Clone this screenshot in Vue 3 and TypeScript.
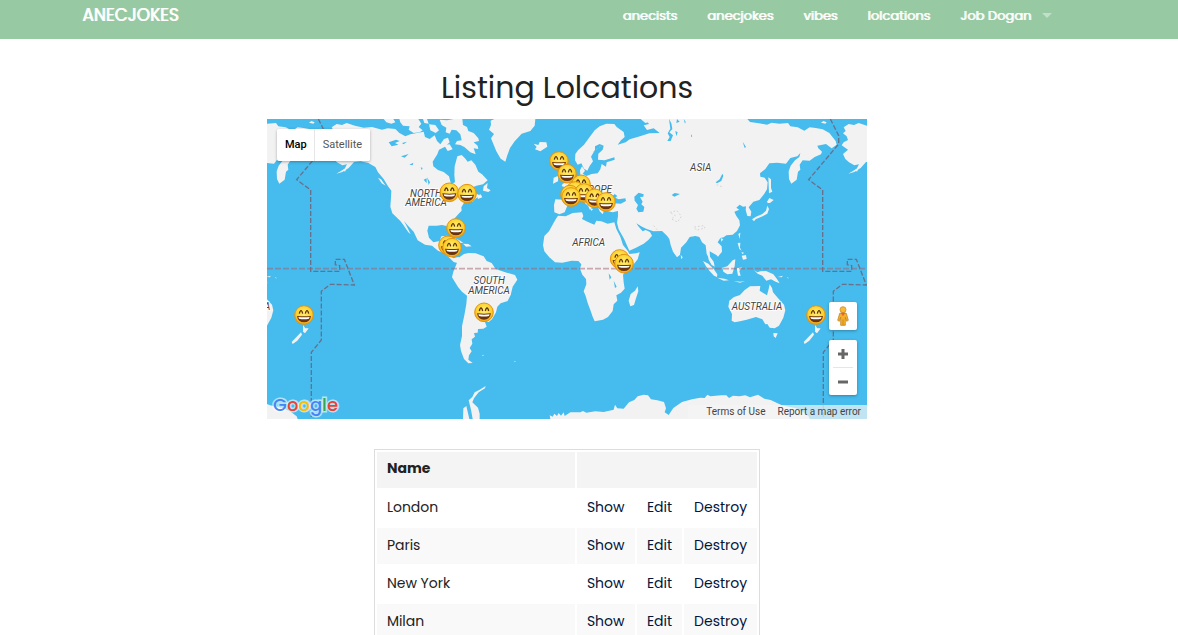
<script setup lang="ts">
interface Point { x: number; y: number }

const navLinks: string[] = ['anecists', 'anecjokes', 'vibes', 'lolcations']
const places: string[] = ['London', 'Paris', 'New York', 'Milan']
const actions: string[] = ['Show', 'Edit', 'Destroy']

// Map drawing units: one world is 1536 units wide.
const worldWidth = 1536
const worlds: number[] = [-worldWidth, 0, worldWidth]

const markers: Point[] = [
  { x: 876, y: 126 }, { x: 900, y: 164 }, { x: 942, y: 196 }, { x: 925, y: 216 },
  { x: 547, y: 220 }, { x: 600, y: 224 }, { x: 909, y: 227 }, { x: 951, y: 222 },
  { x: 912, y: 234 }, { x: 983, y: 238 }, { x: 1017, y: 249 }, { x: 567, y: 327 },
  { x: 543, y: 379 }, { x: 555, y: 386 }, { x: 1058, y: 420 }, { x: 1071, y: 434 },
  { x: 651, y: 580 }, { x: 111, y: 588 }, { x: 1647, y: 588 },
]

const regions: { text: string; x: number; y: number }[] = [
  { text: 'NORTH', x: 477, y: 233 }, { text: 'AMERICA', x: 477, y: 261 },
  { text: 'EUROPE', x: 981, y: 221 }, { text: 'ASIA', x: 1301, y: 155 },
  { text: 'AFRICA', x: 965, y: 380 }, { text: 'SOUTH', x: 667, y: 494 },
  { text: 'AMERICA', x: 666, y: 524 }, { text: 'AUSTRALIA', x: 1470, y: 572 },
  { text: 'AUSTRALIA', x: -66, y: 572 },
]
</script>

<template>
  <header class="topbar">
    <nav class="row">
      <a class="brand" href="#">ANECJOKES</a>
      <ul class="menu">
        <li v-for="link in navLinks" :key="link"><a href="#">{{ link }}</a></li>
        <li><a class="user" href="#">Job Dogan<span class="caret"></span></a></li>
      </ul>
    </nav>
  </header>

  <main class="content">
    <h1>Listing Lolcations</h1>

    <section class="map" aria-label="Lolcations map">
      <svg class="world" viewBox="0 0 1800 900" preserveAspectRatio="xMidYMid slice">
        <defs>
          <radialGradient id="face" cx="50%" cy="40%" r="62%">
            <stop offset="0" stop-color="#fff07a" />
            <stop offset="0.65" stop-color="#fbd02c" />
            <stop offset="1" stop-color="#ee9a0e" />
          </radialGradient>
          <g id="smile">
            <circle r="28" fill="url(#face)" stroke="#e5930f" stroke-width="3" />
            <path d="M-14-4Q-12-13-9-13T-4-4M4-4Q6-13 9-13T14-4" fill="none" stroke="#5f3208" stroke-width="4" />
            <path d="M-21 3Q0 5 21 3Q18 22 0 22T-21 3Z" fill="#6b3310" />
            <path d="M-17 6Q0 8 17 6L15 11Q0 14-15 11Z" fill="#fff" />
          </g>
          <g id="land" fill="#f2f2f2">
            <!-- North and Central America -->
            <path d="M194 25L209 15 225 18 239 12 264 20 290 26 315 24 345 32 362 28 385 30 397 42 415 52 430 46 450 42 470 38 474 54 488 60 503 49 510 66 520 76 531 60 543 56 548 70 534 83 516 92 511 106 497 128 499 142 513 153 530 159 546 172 552 195 564 190 562 168 563 142 571 112 584 108 594 118 602 128 613 124 625 137 634 158 645 166 662 184 648 196 628 200 612 207 626 210 619 221 629 224 640 230 627 238 617 248 607 246 590 253 583 265 584 275 575 284 563 298 553 309 557 322 563 337 558 346 549 336 542 322 525 318 509 320 485 320 481 335 486 356 499 370 518 366 523 352 541 350 536 374 524 384 547 388 548 405 558 418 574 414 586 421 581 430 571 432 560 429 545 414 530 402 513 395 495 380 474 377 452 364 440 338 421 318 411 306 423 329 431 346 424 340 409 318 400 306 390 296 376 283 370 263 372 235 373 215 363 202 350 180 333 160 325 144 304 132 280 127 261 129 245 147 226 159 208 164 233 149 240 136 226 139 210 130 199 120 192 105 207 92 188 79 194 70 207 63 203 52 192 43 200 36Z" />
            <!-- Arctic islands -->
            <path d="M350 0L379 0 385 10 373 14 358 10ZM397 0L454 0 463 14 455 24 467 34 458 40 440 42 425 32 428 22 408 20 400 10ZM468 0L480 0 485 14 472 12ZM486 16L505 18 516 34 506 42 490 34ZM518 2L540 4 560 0 586 0 588 18 600 24 604 36 620 42 634 58 636 66 620 70 632 80 634 90 620 88 626 106 610 100 592 84 580 78 564 76 570 66 584 64 580 46 568 34 554 32 548 44 536 40 538 26 524 18ZM531 78L548 76 557 91 542 96Z" />
            <path d="M650 202L662 192 660 207 671 214 664 219 648 215ZM630 230L641 226 646 235 633 240ZM228 153L240 145 234 158ZM333 176L342 181 356 200 344 193ZM126 11L133 6 143 10 139 14Z" />
            <!-- Greenland and Iceland -->
            <path d="M666 32L672 18 671 5 682 0 805 0 803 20 790 36 764 44 743 67 729 87 721 109 715 128 701 119 688 97 680 77 672 58 681 45Z" />
            <path d="M800 74L814 78 818 69 838 70 841 83 820 97 804 91 809 84Z" />
            <!-- Caribbean -->
            <path d="M545 363L563 357 580 365 589 372 576 371 561 363ZM588 374L604 375 614 382 597 383ZM570 382L579 383 574 386Z" />
            <!-- South America -->
            <path d="M570 431L575 416 591 405 605 402 626 403 650 412 659 426 674 432 686 450 719 461 744 468 751 482 737 503 731 528 722 546 701 553 691 563 687 580 675 601 665 609 653 606 659 623 649 629 633 630 632 641 621 642 624 653 614 661 616 674 608 687 614 697 606 709 604 722 617 732 604 733 591 720 582 696 579 678 585 651 585 622 592 589 598 555 600 530 585 518 573 504 555 475 559 458Z" />
            <!-- Europe and Asia -->
            <path d="M925 105L924 124 932 137 943 133 951 149 961 155 968 141 978 127 972 113 984 92 984 82 998 75 1010 80 1007 92 994 104 993 122 1013 124 1042 115 1043 122 1019 130 1017 143 1004 135 1000 151 992 163 974 165 958 171 947 164 954 155 945 142 939 154 940 168 920 175 908 187 887 194 884 201 899 207 898 230 892 242 865 241 861 258 862 280 877 286 893 280 901 260 919 249 940 239 950 249 963 260 969 273 975 265 963 251 956 238 962 235 977 246 989 256 998 277 1007 286 1010 278 1006 266 1019 259 1020 276 1037 280 1053 276 1053 291 1050 311 1055 331 1071 359 1087 395 1107 386 1130 374 1144 363 1155 350 1149 339 1136 333 1127 337 1114 322 1108 313 1125 323 1139 330 1159 337 1185 336 1200 350 1207 360 1211 378 1218 398 1230 415 1239 407 1242 386 1258 370 1268 354 1285 351 1297 354 1305 370 1316 379 1319 405 1329 423 1339 440 1343 443 1340 428 1329 413 1328 397 1348 408 1353 413 1365 398 1364 382 1352 370 1360 357 1370 355 1378 349 1397 347 1410 336 1419 319 1417 304 1408 291 1402 278 1417 272 1408 266 1418 257 1428 263 1437 262 1436 273 1441 291 1451 292 1453 278 1445 265 1459 248 1477 243 1491 226 1500 211 1502 190 1493 176 1480 173 1479 163 1495 150 1507 133 1530 131 1557 134 1570 117 1591 112 1600 102 1597 114 1584 124 1571 140 1565 157 1566 180 1573 194 1589 182 1593 158 1600 152 1598 137 1607 124 1628 125 1643 114 1662 106 1665 98 1654 88 1651 80 1677 75 1694 88 1709 77 1706 66 1687 42 1667 31 1646 27 1628 25 1612 35 1592 25 1570 22 1563 12 1537 14 1514 11 1500 17 1476 13 1449 9 1441 0 1135 0 1146 15 1130 19 1140 33 1160 28 1178 42 1147 43 1119 52 1088 61 1076 70 1052 77 1062 64 1073 54 1070 39 1049 24 1042 15 1018 14 998 22 983 34 968 54 951 77 933 94Z" />
            <path d="M890 138L905 136 914 159 931 181 923 190 896 194 904 180 894 165ZM860 176L874 170 873 187 858 194ZM1121 0L1138 0 1148 9 1135 12ZM969 268L978 270 974 276Z" />
            <!-- Africa -->
            <path d="M873 290L896 292 917 282 945 280 949 291 945 300 963 309 982 317 988 305 1003 307 1022 314 1042 310 1048 330 1060 353 1068 378 1083 397 1087 405 1107 403 1118 400 1112 421 1096 441 1078 455 1068 467 1070 490 1073 509 1062 521 1048 529 1051 545 1040 556 1037 576 1023 594 1008 602 983 607 977 593 970 573 962 552 956 531 950 517 958 496 957 480 946 467 939 449 943 436 934 426 914 425 886 431 864 430 847 415 832 397 828 379 832 351 846 337 858 315 866 301Z" />
            <path d="M1112 502L1114 517 1107 538 1101 558 1090 562 1085 545 1091 525 1104 515Z" />
            <!-- Japan, Sakhalin, Philippines -->
            <path d="M1504 175L1512 181 1512 207 1516 218 1506 223ZM1500 248L1507 237 1520 243 1509 252 1502 252ZM1501 260L1506 270 1501 284 1487 292 1466 301 1461 307 1455 301 1467 293 1486 285 1497 275ZM1414 345L1420 341 1418 360ZM1412 372L1420 371 1419 386 1424 395 1417 390ZM1424 410L1437 408 1439 420 1428 422ZM1423 399L1431 401 1427 406ZM1241 407L1247 415 1243 421ZM1361 357L1369 361 1363 368Z" />
            <!-- Indonesia and New Guinea -->
            <path d="M1308 426L1324 434 1340 450 1351 466 1350 474 1341 470 1327 455 1316 440ZM1323 410L1334 422 1342 442 1334 438 1325 422ZM1351 476L1372 479 1386 484 1370 485ZM1366 446L1381 442 1397 424 1405 421 1403 442 1396 464 1381 466 1369 458ZM1409 448L1425 445 1417 456 1421 470 1413 470ZM1461 453L1471 460 1480 457 1497 456 1519 466 1530 480 1538 493 1526 488 1512 481 1498 485 1486 470 1472 464ZM1400 486L1420 488 1434 486 1419 491ZM1532 474L1548 470 1544 475ZM1560 474L1566 478 1562 478Z" />
            <!-- Australia, Tasmania and New Zealand -->
            <path d="M1387 545L1401 534 1419 528 1433 513 1449 502 1480 501 1478 515 1500 529 1505 510 1508 496 1515 507 1518 520 1532 536 1551 557 1555 574 1549 596 1536 620 1523 628 1508 626 1501 615 1495 616 1486 601 1467 594 1439 602 1419 607 1403 610 1394 605 1395 585 1384 563Z" />
            <path d="M1519 642L1532 643 1526 657 1520 652ZM1644 618L1651 628 1661 628 1650 643 1644 638ZM1638 640L1641 647 1627 665 1613 675 1610 669Z" />
            <!-- Antarctica and southern islands -->
            <path d="M645 709L651 707 648 711ZM742 726L747 727 743 729ZM605 844L616 834 623 820 638 812 656 801 654 808 635 820 621 838 616 850 633 866 638 884 638 900 617 900 612 872ZM589 868L598 861 607 900 588 900ZM850 900L848 889 857 893 862 884 870 891 875 882 882 890 890 880 893 891 910 880 940 880 948 876 958 881 985 877 1010 879 1040 872 1044 857 1051 868 1070 869 1086 850 1102 843 1112 832 1130 827 1143 829 1152 841 1171 844 1191 849 1197 868 1193 880 1205 888 1219 867 1245 849 1275 841 1300 836 1313 837 1321 827 1330 832 1363 829 1378 829 1386 837 1398 830 1417 832 1435 829 1449 835 1473 827 1492 839 1511 843 1530 852 1545 859 1568 864 1588 868 1607 878 1625 892 1628 900Z" />
          </g>
        </defs>

        <rect width="1800" height="900" fill="#46bbed" />

        <g v-for="offset in worlds" :key="offset" :transform="`translate(${offset} 0)`">
          <use href="#land" />
          <!-- Inland seas and lakes -->
          <g fill="#46bbed">
            <path d="M1019 242L1032 236 1043 225 1051 231 1045 236 1055 241 1075 238 1077 246 1061 254 1041 253 1025 256ZM1102 233L1115 221 1130 226 1129 233 1119 234 1127 248 1123 256 1132 264 1129 278 1114 280 1108 269 1113 258 1103 245Z" />
            <path d="M365 70L387 62 398 66 384 72 394 77 374 82ZM402 112L425 105 413 116ZM427 137L439 131 437 139ZM470 182L479 178 479 193ZM480 175L489 190 485 198ZM461 145L467 147 464 153ZM405 72L420 68 410 76ZM526 221L540 216 552 225 535 230ZM1346 190L1358 181 1366 164 1369 170 1363 186 1350 193ZM1214 228L1223 222 1239 225 1222 233ZM1427 68L1437 84 1433 87ZM1206 0L1213 13 1216 30 1207 40 1218 49 1211 66 1201 66 1208 54 1202 43 1210 29ZM1230 0L1238 8 1228 12ZM1225 36L1232 40 1228 52ZM1250 0L1256 8 1254 14ZM1025 463L1033 475 1028 482ZM1040 485L1049 503 1044 507ZM1272 46L1276 52 1272 54Z" />
          </g>
          <g fill="none" stroke="#c4c4c4" stroke-width="2" stroke-dasharray="5 6">
            <path d="M1209 280L1230 275 1243 292 1232 309 1213 300 1225 290ZM1282 324L1311 320 1314 327 1288 334ZM1349 197L1366 204M1160 320L1173 335M979 98L1003 80" />
          </g>
          <path d="M154 0L179 50V75L89 182 131 213V457H218V440L205 437V421H232L262 498 190 496 163 517V663L133 700V900" class="boundary" />
        </g>
        <path d="M0 449H1800" class="equator" />

        <text v-for="(region, i) in regions" :key="i" :x="region.x" :y="region.y" class="region">{{ region.text }}</text>
        <use v-for="(marker, i) in markers" :key="'m' + i" href="#smile" :x="marker.x" :y="marker.y" />
      </svg>

      <div class="map-types">
        <button type="button" class="active">Map</button>
        <button type="button">Satellite</button>
      </div>

      <div class="controls">
        <button type="button" class="pegman" aria-label="Street View">
          <svg viewBox="0 0 36 60">
            <path d="M8 22Q18 18 28 22L34 43 29 46 25 34V58H11V34L7 46 2 43Z" fill="#f5b12d" stroke="#b97813" stroke-width="2" />
            <circle cx="18" cy="11" r="9" fill="#f9b934" stroke="#c38219" stroke-width="2" />
            <path d="M11 20L18 31 25 20Z" fill="#e2682c" />
            <path d="M18 40V58" stroke="#b97813" stroke-width="2" />
          </svg>
        </button>
        <div class="zoom">
          <button type="button" aria-label="Zoom in"><svg viewBox="0 0 12 12"><path d="M6 1V11M1 6H11" /></svg></button>
          <button type="button" aria-label="Zoom out"><svg viewBox="0 0 12 12"><path d="M1 6H11" /></svg></button>
        </div>
      </div>

      <a class="google" href="#"><span class="blue">G</span><span class="red">o</span><span class="yellow">o</span><span class="blue">g</span><span class="green">l</span><span class="red">e</span></a>
      <div class="legal"><a href="#">Terms of Use</a><a href="#">Report a map error</a></div>
    </section>

    <table>
      <thead>
        <tr><th class="name" scope="col">Name</th><th colspan="3"></th></tr>
      </thead>
      <tbody>
        <tr v-for="place in places" :key="place">
          <td>{{ place }}</td>
          <td v-for="action in actions" :key="action" :class="action.toLowerCase()"><a href="#">{{ action }}</a></td>
        </tr>
      </tbody>
    </table>
  </main>
</template>

<style>
body {
  margin: 0;
  background: #fff;
  color: #222;
  font-family: Poppins, Inter, "Liberation Sans", sans-serif;
}
</style>

<style scoped>
a { color: inherit; text-decoration: none; }
button { font: inherit; color: inherit; border: 0; padding: 0; background: #fff; cursor: pointer; }

.topbar { background: #97c9a3; padding-right: 44px; color: #fff; text-shadow: 1px 0 rgba(255, 255, 255, 0.9); }
.row {
  display: flex;
  justify-content: space-between;
  max-width: 1000px;
  height: 39px;
  margin: 0 auto;
}
.brand { padding-left: 15px; font-size: 17px; line-height: 31px; font-weight: 400; }
.menu { display: flex; margin: 0; padding: 0; list-style: none; font-size: 13px; line-height: 31px; font-weight: 400; }
.menu a { display: block; padding: 0 15px; }
.menu .user { display: flex; align-items: center; gap: 11px; }
.caret { border: 5px solid transparent; border-top-color: #c3dfca; border-bottom: 0; }

.content { display: flex; flex-direction: column; align-items: center; padding: 28px 44px 0 0; }
h1 { margin: 0 0 10px; font-size: 30px; line-height: 42px; font-weight: 400; }

.map { position: relative; width: 100%; max-width: 600px; aspect-ratio: 2 / 1; overflow: hidden; margin-bottom: 30px; font-family: Roboto, sans-serif; }
.world { display: block; width: 100%; height: 100%; }
.boundary { fill: none; stroke: #66718c; stroke-width: 4; stroke-dasharray: 15 6; }
.equator { fill: none; stroke: rgba(160, 96, 108, 0.5); stroke-width: 5; stroke-dasharray: 18 6; }
.region { fill: #444; stroke: #fff; stroke-width: 5; paint-order: stroke; font: italic 30px Roboto, sans-serif; text-anchor: middle; }

.map-types { position: absolute; left: 10px; top: 10px; display: flex; border-radius: 2px; box-shadow: 0 1px 3px rgba(0, 0, 0, 0.3); font-size: 11px; color: #565656; }
.map-types button { height: 32px; padding: 0 8px 2px; border-radius: 0 2px 2px 0; }
.map-types .active { padding-right: 7px; color: #000; font-weight: 500; border-right: 1px solid #e6e6e6; border-radius: 2px 0 0 2px; }

.controls { position: absolute; right: 10px; bottom: 24px; display: grid; gap: 10px; width: 28px; }
.pegman, .zoom { border-radius: 2px; box-shadow: 0 1px 3px rgba(0, 0, 0, 0.3); background: #fff; }
.pegman { height: 28px; display: grid; place-items: center; }
.pegman svg { width: 12px; height: 20px; }
.zoom { display: grid; padding: 0 4px; }
.zoom button { display: grid; place-items: center; height: 27px; }
.zoom button + button { border-top: 1px solid #e6e6e6; height: 28px; }
.zoom svg { width: 12px; height: 12px; stroke: #666; stroke-width: 3; }

.google { position: absolute; left: 6px; bottom: 2px; font: 500 18px/24px Poppins, Inter, sans-serif; -webkit-text-stroke: 3px rgba(255, 255, 255, 0.6); paint-order: stroke fill; }
.blue { color: #4285f4; }
.red { color: #ea4335; }
.yellow { color: #fbbc05; }
.green { color: #34a853; }
.legal { position: absolute; right: 0; bottom: 0; display: flex; gap: 12px; padding: 0 6px 0 18px; background: rgba(245, 245, 245, 0.7); color: #444; font-size: 10px; line-height: 14px; }

table { border: 1px solid #ddd; border-spacing: 2px; font-size: 14px; line-height: 20px; }
th, td { height: 20px; text-align: left; }
th { padding: 6px 10px 10px; background: #f4f4f4; font-weight: 700; }
td { padding: 7px 10px 9px; }
tbody tr:nth-child(even) td { background: #f9f9f9; }
td a { color: #00163b; }
.name { width: 178px; }
.show { width: 38px; }
.edit { width: 25px; }
.destroy { width: 53px; }
</style>
